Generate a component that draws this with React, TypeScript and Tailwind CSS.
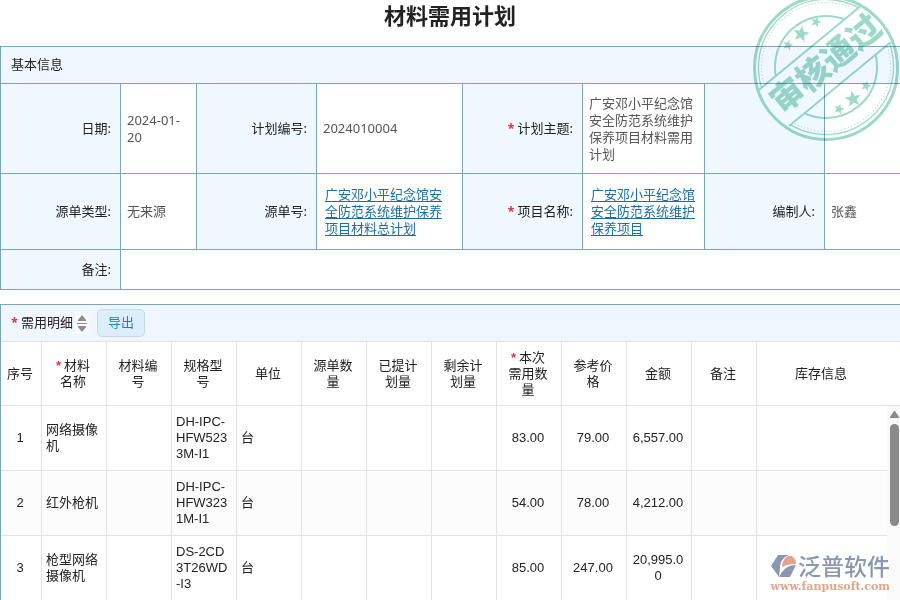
import React from "react";

const SANS = "font-['Noto_Sans','Noto_Sans_CJK_SC',sans-serif]";
const CELL_FONT = "font-['Liberation_Sans','Noto_Sans_CJK_SC',sans-serif]";

function Required() {
  return <span className="mr-[3px] font-bold text-[#d9363e]">*</span>;
}

function Label({ children, required }: { children?: React.ReactNode; required?: boolean }) {
  return (
    <th scope="row" className="border-r border-b border-[#7ba5bb] bg-[#f0f8ff] pr-[9px] text-right align-middle font-normal text-[#222]">
      {required && <Required />}
      {children}
    </th>
  );
}

function Value({ children, last, span }: { children?: React.ReactNode; last?: boolean; span?: number }) {
  return (
    <td
      colSpan={span}
      className={
        last
          ? "border-b border-[#7ba5bb] px-1.5 align-middle text-[#555]"
          : "border-r border-b border-[#7ba5bb] px-1.5 align-middle text-[#555]"
      }
    >
      {children}
    </td>
  );
}

function RecordLink({ children }: { children: React.ReactNode }) {
  return (
    <a href="#" className="block px-0.5 text-[#1a6ea8] underline underline-offset-2">
      {children}
    </a>
  );
}

function BasicInfo() {
  return (
    <section className="shrink-0 border-t border-l border-[#7ba5bb]">
      <h2 className="flex h-[37px] items-center border-b border-[#7ba5bb] bg-[#f0f6ff] px-2.5 text-[13px] text-[#222]">
        基本信息
      </h2>
      <table className="w-full table-fixed border-separate border-spacing-0 text-[13px] leading-[17px]">
        <colgroup>
          <col className="w-[120px]" />
          <col className="w-[76px]" />
          <col className="w-[120px]" />
          <col className="w-[146px]" />
          <col className="w-[120px]" />
          <col className="w-[122px]" />
          <col className="w-[120px]" />
          <col />
        </colgroup>
        <tbody>
          <tr className="h-[90px]">
            <Label>日期:</Label>
            <Value>2024-01-20</Value>
            <Label>计划编号:</Label>
            <Value>2024010004</Value>
            <Label required>计划主题:</Label>
            <Value>广安邓小平纪念馆安全防范系统维护保养项目材料需用计划</Value>
            <Label />
            <Value last />
          </tr>
          <tr className="h-[76px]">
            <Label>源单类型:</Label>
            <Value>无来源</Value>
            <Label>源单号:</Label>
            <Value>
              <RecordLink>广安邓小平纪念馆安全防范系统维护保养项目材料总计划</RecordLink>
            </Value>
            <Label required>项目名称:</Label>
            <Value>
              <RecordLink>广安邓小平纪念馆安全防范系统维护保养项目</RecordLink>
            </Value>
            <Label>编制人:</Label>
            <Value last>张鑫</Value>
          </tr>
          <tr className="h-[40px]">
            <Label>备注:</Label>
            <Value last span={7} />
          </tr>
        </tbody>
      </table>
    </section>
  );
}

const columns: { title: string; required?: boolean }[] = [
  { title: "序号" },
  { title: "材料名称", required: true },
  { title: "材料编号" },
  { title: "规格型号" },
  { title: "单位" },
  { title: "源单数量" },
  { title: "已提计划量" },
  { title: "剩余计划量" },
  { title: "本次需用数量", required: true },
  { title: "参考价格" },
  { title: "金额" },
  { title: "备注" },
  { title: "库存信息" },
];

const rows = [
  ["1", "网络摄像机", "", "DH-IPC-HFW5233M-I1", "台", "", "", "", "83.00", "79.00", "6,557.00", "", ""],
  ["2", "红外枪机", "", "DH-IPC-HFW3231M-I1", "台", "", "", "", "54.00", "78.00", "4,212.00", "", ""],
  ["3", "枪型网络摄像机", "", "DS-2CD3T26WD-I3", "台", "", "", "", "85.00", "247.00", "20,995.00", "", ""],
];

const leftAligned = [1, 2, 3, 4];

function Details() {
  return (
    <section className="mt-[14px] flex min-h-0 flex-1 flex-col border-t border-l border-[#7ba5bb]">
      <div className="flex h-[37px] shrink-0 items-center border-b border-[#e2e2e2] bg-[#f0f6ff] pl-2.5">
        <h2 className="mr-0.5 text-[13px] text-[#222]">
          <Required />
          需用明细
        </h2>
        <button type="button" aria-label="排序" className="h-[19px] w-[14px] bg-[#f9f9f9]">
          <svg viewBox="0 0 14 19" className="block h-[19px] w-[14px]" fill="#8c8c8c">
            <path d="M7 1l4 5v1H3V6zM2 9h10v1H2zM3 12h8v1l-4 5-4-5z" />
          </svg>
        </button>
        <button
          type="button"
          className="ml-2 h-7 w-12 rounded-[5px] border border-[#c3d8e8] bg-[#dcedfb] text-[13px] text-[#2580b8]"
        >
          导出
        </button>
      </div>
      <div className="grid min-h-0 flex-1 grid-cols-[1fr_13px] overflow-hidden">
        <div>
          <table className={`${CELL_FONT} w-full table-fixed border-separate border-spacing-0 text-[13px] leading-4 text-[#222]`}>
            <colgroup>
              {columns.map((c, i) => (
                <col key={i} className={i === 0 ? "w-[41px]" : i < 12 ? "w-[65px]" : ""} />
              ))}
            </colgroup>
            <thead>
              <tr className="h-16">
                {columns.map((c, i) => (
                  <th
                    key={i}
                    scope="col"
                    className={`border-b border-[#e2e2e2] align-middle font-normal ${i < 12 ? "border-r" : ""} ${
                      i === 0 ? "pr-1.5 pl-1" : "pr-3 pl-2.5"
                    }`}
                  >
                    {c.required && <Required />}
                    {c.title}
                  </th>
                ))}
              </tr>
            </thead>
            <tbody>
              {rows.map((r) => (
                <tr key={r[0]} className="h-[65px] even:bg-[#fcfcfc]">
                  {r.map((v, i) => (
                    <td
                      key={i}
                      className={`border-b border-[#e2e2e2] pr-1.5 pl-1 align-middle break-all ${i < 12 ? "border-r" : ""} ${
                        leftAligned.includes(i) ? "text-left" : "text-center"
                      }`}
                    >
                      {v}
                    </td>
                  ))}
                </tr>
              ))}
            </tbody>
          </table>
        </div>
        <div className="flex flex-col">
          <div className="h-16 shrink-0 border-b border-[#e2e2e2]" />
          <div className="flex flex-1 flex-col items-center bg-[#fafafa] pt-[5px] pl-0.5">
            <svg viewBox="0 0 9 7" className="h-[7px] w-[9px] shrink-0" fill="#8a8a8a">
              <path d="M4 0h1l4 6v1H0V6z" />
            </svg>
            <div className="mt-1.5 h-[102px] w-[9px] shrink-0 rounded-full bg-[#8a8a8a]" />
          </div>
        </div>
      </div>
    </section>
  );
}

function Star({ x, y, r, turn }: { x: number; y: number; r: number; turn: number }) {
  const points = Array.from({ length: 10 }, (_, i) => {
    const d = i % 2 === 0 ? r : r * 0.42;
    const a = (Math.PI / 5) * i - Math.PI / 2;
    return `${(d * Math.cos(a)).toFixed(2)},${(d * Math.sin(a)).toFixed(2)}`;
  }).join(" ");
  return <polygon points={points} transform={`translate(${x} ${y}) rotate(${turn})`} fill="#9dd9c8" />;
}

function ApprovalStamp() {
  return (
    <svg
      viewBox="-74 -67 148 142"
      className="pointer-events-none absolute top-0 right-0 h-[142px] w-[148px] mix-blend-multiply"
      role="img"
      aria-label="审核通过"
    >
      <defs>
        <clipPath id="upper-half">
          <rect x="-80" y="-80" width="160" height="55" />
        </clipPath>
        <clipPath id="lower-half">
          <rect x="-80" y="22" width="160" height="59" />
        </clipPath>
      </defs>
      <g fill="none" stroke="#9dd9c8">
        <circle cy="1" r="71.5" strokeWidth="3" />
        <g transform="rotate(-39.5)">
          {["url(#upper-half)", "url(#lower-half)"].map((clip) => (
            <g key={clip} clipPath={clip}>
              <circle r="67.5" strokeWidth="1.3" />
              <circle r="64.5" strokeWidth="1" strokeDasharray="1 2.4" />
              <circle r="51" strokeWidth="2" />
            </g>
          ))}
          <path d="M-66-25H66M-66 22H66" strokeWidth="2" />
        </g>
      </g>
      <Star x={-38} y={-22} r={5.5} turn={15} />
      <Star x={-25} y={-33} r={8.5} turn={10} />
      <Star x={-10} y={-45} r={5.5} turn={15} />
      <Star x={13} y={42} r={5.5} turn={15} />
      <Star x={27} y={32} r={8.5} turn={-10} />
      <Star x={40} y={19} r={5.5} turn={15} />
      <text
        transform="rotate(-39.5)"
        x="2"
        y="9"
        textAnchor="middle"
        fontSize="33"
        fontWeight="900"
        fill="#9dd9c8"
        fontFamily="'Noto Sans CJK SC', sans-serif"
      >
        审核通过
      </text>
    </svg>
  );
}

function Watermark() {
  return (
    <div className="pointer-events-none absolute right-2.5 bottom-2 flex flex-col items-end gap-1">
      <div className="flex items-center gap-px">
        <svg viewBox="0 0 26 24" className="h-6 w-[26px]">
          <path d="M7 1h11C12 3 9 8 9 14l-1 9L0 12z" fill="#8a97b1" />
          <path d="M11 13C11 6 16 1 21 2q4 3 4 8c-6 0-10 1-14 3z" fill="#e2a58b" />
          <path d="M25 11C17 11 12 15 8 23h11z" fill="#8a97b1" />
        </svg>
        <span className="text-[23px] leading-5 font-medium text-[#8a97b1]">泛普软件</span>
      </div>
      <span className="font-['DejaVu_Serif',serif] text-[11px] leading-[10px] font-bold text-[#e2a58b]">www.fanpusoft.com</span>
    </div>
  );
}

export default function App() {
  return (
    <main lang="zh-CN" className={`${SANS} relative flex h-screen flex-col overflow-hidden bg-white`}>
      <h1 className="h-[46px] shrink-0 text-center text-[22px] leading-[30px] font-bold text-[#222]">材料需用计划</h1>
      <BasicInfo />
      <Details />
      <ApprovalStamp />
      <Watermark />
    </main>
  );
}
